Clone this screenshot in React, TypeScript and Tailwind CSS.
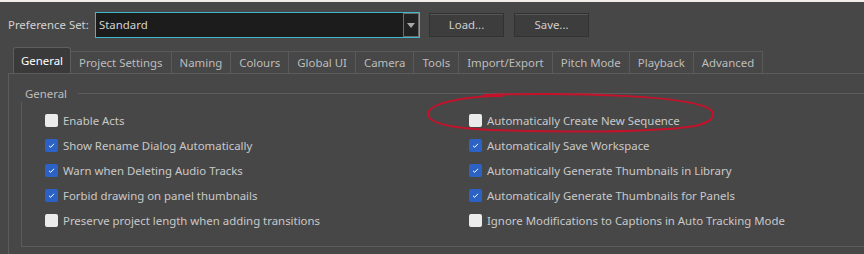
const tabs = [
  "General",
  "Project Settings",
  "Naming",
  "Colours",
  "Global UI",
  "Camera",
  "Tools",
  "Import/Export",
  "Pitch Mode",
  "Playback",
  "Advanced",
];

const leftOptions = [
  { label: "Enable Acts", checked: false },
  { label: "Show Rename Dialog Automatically", checked: true },
  { label: "Warn when Deleting Audio Tracks", checked: true },
  { label: "Forbid drawing on panel thumbnails", checked: true },
  { label: "Preserve project length when adding transitions", checked: false },
];

const rightOptions = [
  { label: "Automatically Create New Sequence", checked: false },
  { label: "Automatically Save Workspace", checked: true },
  { label: "Automatically Generate Thumbnails in Library", checked: true },
  { label: "Automatically Generate Thumbnails for Panels", checked: true },
  { label: "Ignore Modifications to Captions in Auto Tracking Mode", checked: false },
];

function CheckBox({ checked }: { checked: boolean }) {
  if (!checked) {
    return <span className="h-[13px] w-[13px] shrink-0 rounded-[2px] bg-[#ebebeb]" />;
  }
  return (
    <span className="flex h-[13px] w-[13px] shrink-0 items-center justify-center rounded-[2px] bg-[#2c62c6]">
      <svg width="9" height="9" viewBox="0 0 9 9">
        <path d="M2 4.8 L3.7 6.3 L7 2.8" fill="none" stroke="#ffffff" strokeWidth="1" />
      </svg>
    </span>
  );
}

function Option({ label, checked }: { label: string; checked: boolean }) {
  return (
    <div className="flex h-[25px] items-center gap-[5px]">
      <CheckBox checked={checked} />
      <span className="whitespace-nowrap">{label}</span>
    </div>
  );
}

export default function App() {
  return (
    <div
      className="relative h-[254px] w-[864px] overflow-hidden bg-[#474747] text-[11.4px] text-[#c9c9c9]"
      style={{ fontFamily: '"Noto Sans", "Open Sans", sans-serif' }}
    >
      <div className="h-[2px] bg-[#f2ede9]" />

      {/* Preference set row */}
      <div className="flex items-center pl-[8px] pt-[10px]">
        <span className="w-[87px] text-[#d2d2d2]">Preference Set:</span>
        <div className="flex h-[26px] w-[325px] items-stretch border border-[#40b7cc] bg-[#1c1c1c]">
          <span className="flex-1 pl-[3px] leading-[24px] text-[#d4d4d4]">Standard</span>
          <span className="flex w-[16px] items-center justify-center border border-[#6b6b6b] bg-[#222222]">
            <svg width="8" height="5" viewBox="0 0 8 5">
              <path d="M0 0 H8 L4 5 Z" fill="#a8a8a8" />
            </svg>
          </span>
        </div>
        <button className="ml-[9px] h-[24px] w-[75px] border border-[#323232] bg-[#3d3d3d] text-[#cfcfcf] shadow-[inset_0_1px_0_#565656]">
          Load...
        </button>
        <button className="ml-[10px] h-[24px] w-[75px] border border-[#323232] bg-[#3d3d3d] text-[#cfcfcf] shadow-[inset_0_1px_0_#565656]">
          Save...
        </button>
      </div>

      {/* Tabs */}
      <div className="mt-[9px] flex items-end pl-[13px]">
        {tabs.map((t, i) =>
          i === 0 ? (
            <div
              key={t}
              className="flex h-[26px] items-center rounded-t-[3px] border border-b-0 border-[#5e5e5e] bg-[#3a3a3a] px-[7px] text-white"
            >
              {t}
            </div>
          ) : (
            <div
              key={t}
              className="flex h-[22px] items-center border-t border-r border-[#5a5a5a] px-[8px] text-[#bdbdbd]"
            >
              {t}
            </div>
          )
        )}
      </div>

      {/* Tab pane */}
      <div className="ml-[8px] h-[200px] border-l border-t border-[#5c5c5c] pl-[11px]">
        <div className="mt-[11px] flex items-center">
          <span className="pl-[5px] pr-[11px] text-[#bdbdbd]">General</span>
          <div className="h-px flex-1 bg-[#5c5c5c]" />
        </div>
        <div className="ml-[1px] h-[145px] border-b border-l border-[#5c5c5c] pt-[6px]">
          <div className="grid grid-cols-[424px_1fr] pl-[23px]">
            <div className="flex flex-col">
              {leftOptions.map((o) => (
                <Option key={o.label} {...o} />
              ))}
            </div>
            <div className="flex flex-col">
              {rightOptions.map((o) => (
                <Option key={o.label} {...o} />
              ))}
            </div>
          </div>
        </div>
      </div>

      {/* hand-drawn annotation */}
      <svg className="pointer-events-none absolute inset-0" width="864" height="254">
        <path
          d="M484 95 C 580 92, 695 96, 711 110 C 716 116, 712 122, 695 126 C 650 133, 560 132, 490 130 C 450 128, 428 123, 428 114 C 429 105, 448 100, 478 97 C 486 96, 494 96, 502 96"
          fill="none"
          stroke="#c4122b"
          strokeWidth="2"
          strokeLinecap="round"
        />
      </svg>
    </div>
  );
}
